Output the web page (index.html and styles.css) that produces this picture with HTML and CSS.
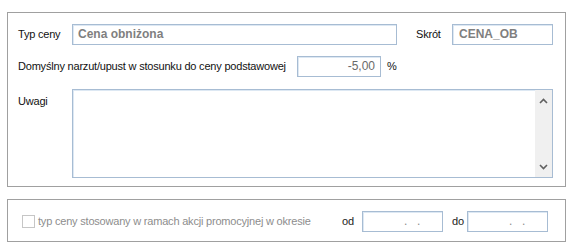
FILE: index.html
```html
<!DOCTYPE html>
<html lang="pl">
<head>
<meta charset="utf-8">
<link rel="stylesheet" href="styles.css">
</head>
<body>
<div class="group main">
  <div class="row r1">
    <span class="lbl w-typ">Typ ceny</span>
    <div class="field f-name">Cena obniżona</div>
    <span class="lbl skrot">Skrót</span>
    <div class="field f-short">CENA_OB</div>
  </div>
  <div class="row r2">
    <span class="lbl w-long">Domyślny narzut/upust w stosunku do ceny podstawowej</span>
    <div class="field f-num">-5,00</div>
    <span class="lbl pct">%</span>
  </div>
  <div class="row r3">
    <span class="lbl w-typ top">Uwagi</span>
    <div class="memo">
      <div class="memo-body"></div>
      <div class="scroll">
        <svg width="9" height="6" viewBox="0 0 9 6"><polyline points="1,5 4.5,1.5 8,5" fill="none" stroke="#606060" stroke-width="1.6"/></svg>
        <svg width="9" height="6" viewBox="0 0 9 6"><polyline points="1,1 4.5,4.5 8,1" fill="none" stroke="#606060" stroke-width="1.6"/></svg>
      </div>
    </div>
  </div>
</div>
<div class="group promo">
  <div class="row r4">
    <span class="chk"></span>
    <span class="lbl dis">typ ceny stosowany w ramach akcji promocyjnej w okresie</span>
    <span class="lbl od">od</span>
    <div class="field f-date"><span class="dots">.&nbsp;&nbsp;.</span></div>
    <span class="lbl do">do</span>
    <div class="field f-date"><span class="dots">.&nbsp;&nbsp;.</span></div>
  </div>
</div>
</body>
</html>
```
FILE: styles.css
```css
html, body {
  margin: 0;
  padding: 0;
  background: #ffffff;
}
body {
  font-family: "Liberation Sans", Arial, sans-serif;
  font-size: 11px;
  color: #000;
  width: 576px;
  height: 252px;
  overflow: hidden;
}
.group {
  box-sizing: border-box;
  width: 559px;
  margin-left: 7px;
  border: 1px solid #a0a0a0;
}
.main {
  margin-top: 12px;
  height: 175px;
  padding: 11px 12px 0 10px;
}
.promo {
  margin-top: 12px;
  height: 43px;
  padding: 11px 0 0 14px;
}
.row {
  display: flex;
  align-items: center;
}
.r1 { height: 21px; }
.r2 { height: 21px; margin-top: 11px; }
.r3 { margin-top: 12px; align-items: flex-start; }
.lbl {
  white-space: nowrap;
  line-height: 13px;
  letter-spacing: -0.2px;
  font-weight: normal;
  color: #111;
  flex: none;
}
.w-typ { width: 54px; }
.w-long { width: 279px; }
.top { padding-top: 6px; }
.field {
  box-sizing: border-box;
  height: 21px;
  border: 1px solid #a7bcd3;
  box-shadow: inset 1px 1px 0 #dde8f3;
  background: #fff;
  color: #7f7f7f;
  font-weight: bold;
  font-size: 12px;
  line-height: 19px;
  padding: 0 5px;
  white-space: nowrap;
  flex: none;
}
.f-name { width: 325px; }
.skrot { width: 36px; margin-left: 19px; }
.f-short { width: 101px; padding-left: 6px; }
.f-num {
  width: 84px;
  text-align: right;
  font-weight: normal;
  font-size: 12px;
  color: #6a6a6a;
  padding-right: 5px;
}
.pct { margin-left: 6px; }
.memo {
  box-sizing: border-box;
  width: 481px;
  height: 89px;
  border: 1px solid #a7bcd3;
  box-shadow: inset 1px 1px 0 #dde8f3;
  display: flex;
}
.memo-body { flex: 1; }
.scroll {
  width: 17px;
  background: #f0f0f0;
  display: flex;
  flex-direction: column;
  justify-content: space-between;
  align-items: center;
  padding: 8px 0 7px;
}
.scroll svg { display: block; }
.chk {
  box-sizing: border-box;
  width: 13px;
  height: 13px;
  border: 1px solid #c6c6c6;
  background: #fff;
  flex: none;
}
.lbl.dis { color: #8d8d8d; width: 304px; margin-left: 3px; }
.lbl.od { width: 20px; letter-spacing: 0; color: #222; }
.lbl.do { width: 15px; margin-left: 9px; letter-spacing: 0; color: #222; }
.f-date {
  width: 81px;
  font-weight: normal;
  color: #8d8d8d;
  padding-left: 41px;
}
.dots { letter-spacing: 1px; }
```
